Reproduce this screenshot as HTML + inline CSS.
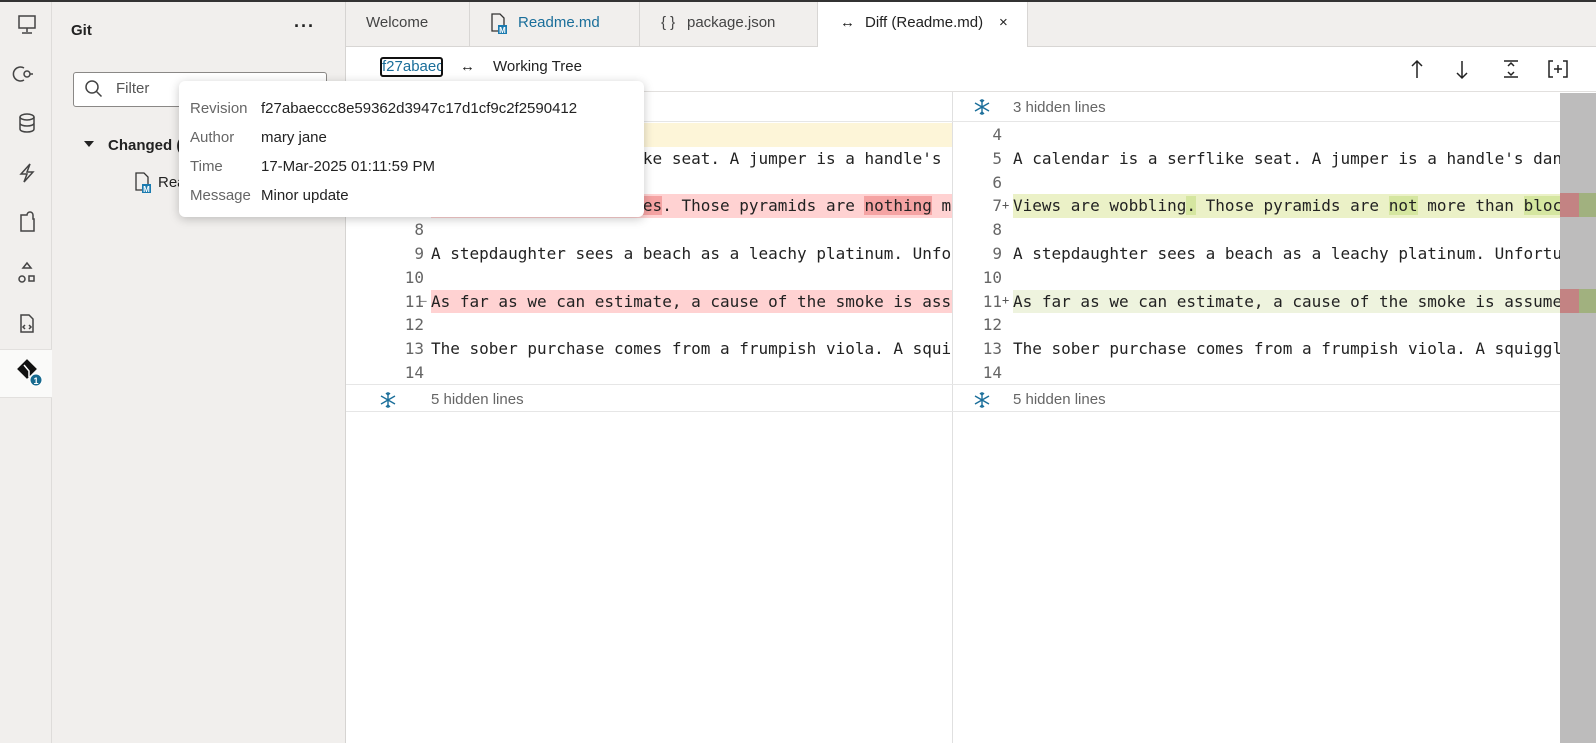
<!DOCTYPE html>
<html><head><meta charset="utf-8"><style>
*{box-sizing:border-box;margin:0;padding:0}
body{width:1596px;height:743px;overflow:hidden;background:#fff;font-family:"Liberation Sans",sans-serif;color:#222;position:relative}
.abs{position:absolute}
#top{left:0;top:0;width:1596px;height:2px;background:#333}
#act{left:0;top:2px;width:52px;height:741px;background:#f1efed;border-right:1px solid #dedcda}
#side{left:52px;top:2px;width:294px;height:741px;background:#f1efed;border-right:1px solid #d6d4d2}
#tabs{left:346px;top:2px;width:1250px;height:45px;background:#f1efed;border-bottom:1px solid #d8d6d4}
.tab{position:absolute;top:0;height:45px;border-right:1px solid #d8d6d4;font-size:15px;line-height:42px;color:#444}
.mono{font-family:"DejaVu Sans Mono","Liberation Mono",monospace;font-size:16px;white-space:pre}
.ln{position:absolute;width:40px;text-align:right;color:#666;font-family:"DejaVu Sans Mono",monospace;font-size:16px}
.row{position:absolute;height:23.8px;line-height:23.8px}
.tt td{padding:0;height:29px;font-size:15px}
</style></head><body>
<div id="top" class="abs"></div>
<div id="act" class="abs">
<svg width="52" height="400" style="position:absolute;left:0;top:-2px" fill="none" stroke="#444" stroke-width="1.5">
<rect x="19" y="16" width="16" height="12"/><path d="M27 28v4M22 33h10"/>
<circle cx="27" cy="74" r="3"/><path d="M33 74h-3M24 68a7 7 0 1 0 0 12"/>
<ellipse cx="27" cy="117" rx="7" ry="3"/><path d="M20 117v12c0 4 14 4 14 0v-12M20 123c0 4 14 4 14 0"/>
<path d="M30 164l-9 10h6l-3 8 9-10h-6z"/>
<path d="M21 215h6a3 3 0 0 1 6 0v4h1v12H21z"/>
<path d="M27 263l4 5h-8zM20 275h0"/><circle cx="22" cy="279" r="3"/><rect x="29" y="276" width="5" height="5"/>
<path d="M21 315h8l4 4v13H21z M25 325l-2 2 2 2M29 325l2 2-2 2"/>
</svg>
<div class="abs" style="left:0;top:347px;width:52px;height:49px;background:#fafaf9;border-top:1px solid #e2e0de;border-bottom:1px solid #e2e0de"></div>
<svg class="abs" style="left:14px;top:356px" width="30" height="30"><rect x="6" y="4" width="14" height="14" transform="rotate(45 13 11)" fill="#111"/><path d="M10 7l5 6v6" stroke="#fff" stroke-width="1.5" fill="none"/><circle cx="22" cy="22" r="6" fill="#176a8f" stroke="#fff"/><text x="22" y="26" font-size="9" fill="#fff" text-anchor="middle" font-family="Liberation Sans" font-weight="bold">1</text></svg>
</div>
<div id="side" class="abs">
<div class="abs" style="left:19px;top:20px;font-size:15px;font-weight:bold">Git</div>
<div class="abs" style="left:242px;top:14px;font-size:18px;font-weight:bold;letter-spacing:1px">···</div>
<div class="abs" style="left:21px;top:70px;width:254px;height:35px;border:1px solid #8a8886;border-radius:3px;background:#fff"></div>
<svg class="abs" style="left:32px;top:77px" width="20" height="20" fill="none" stroke="#444" stroke-width="1.5"><circle cx="8" cy="8" r="6"/><path d="M12.5 12.5l5 5"/></svg>
<div class="abs" style="left:64px;top:78px;font-size:15px;color:#555">Filter</div>
<div class="abs" style="left:32px;top:139px;width:0;height:0;border-left:5px solid transparent;border-right:5px solid transparent;border-top:6px solid #222"></div>
<div class="abs" style="left:56px;top:135px;font-size:15px;font-weight:bold">Changed (1)</div>
<svg class="abs" style="left:82px;top:170px" width="18" height="22" fill="none" stroke="#333" stroke-width="1.3"><path d="M2 1h8l4 4v13H2z"/><rect x="8" y="12" width="9" height="9" fill="#1b7bb0" stroke="none"/><text x="12.5" y="20" font-size="8" fill="#fff" stroke="none" text-anchor="middle" font-family="Liberation Sans" font-weight="bold">M</text></svg>
<div class="abs" style="left:106px;top:172px;font-size:15px">Readme.md</div>
</div>
<div id="tabs" class="abs">
<div class="tab" style="left:0;width:124px;padding-left:20px">Welcome</div>
<div class="tab" style="left:124px;width:170px"></div>
<svg class="abs" style="left:144px;top:11px" width="18" height="22" fill="none" stroke="#333" stroke-width="1.3"><path d="M2 1h8l4 4v13H2z"/><rect x="8" y="12" width="9" height="9" fill="#1b7bb0" stroke="none"/><text x="12.5" y="20" font-size="8" fill="#fff" stroke="none" text-anchor="middle" font-family="Liberation Sans" font-weight="bold">M</text></svg>
<div class="abs" style="left:172px;top:0;font-size:15px;line-height:42px;color:#1a6e9a">Readme.md</div>
<div class="tab" style="left:294px;width:178px"><span style="position:absolute;left:21px">{ }</span><span style="position:absolute;left:47px">package.json</span></div>
<div class="tab" style="left:472px;width:210px;background:#fff;height:46px;color:#222"><span style="position:absolute;left:22px">↔</span><span style="position:absolute;left:47px">Diff (Readme.md)</span><span style="position:absolute;left:181px">×</span></div>
</div>
<div class="abs" style="left:346px;top:47px;width:1250px;height:45px;border-bottom:1px solid #e2e0de;background:#fff"></div>
<div class="abs" style="left:380px;top:57px;width:63px;height:20px;border:2px solid #111;border-radius:3px;font-size:15px;line-height:16px;color:#1a6e9a;overflow:hidden;white-space:nowrap">f27abaec</div>
<div class="abs" style="left:460px;top:58px;font-size:15px">↔</div>
<div class="abs" style="left:493px;top:58px;font-size:15px">Working Tree</div>
<svg class="abs" style="left:1400px;top:55px" width="180" height="28" fill="none" stroke="#222" stroke-width="1.5"><path d="M17 6v17M12 11l5-5 5 5"/><path d="M62 6v17M57 18l5 5 5-5"/><path d="M104 6h14M104 22h14M108 11l3-3 3 3M108 17l3 3 3-3"/><path d="M153 6h-4v16h4M163 6h4v16h-4M158 10v8M154 14h8"/></svg>
<div class="abs" style="left:346px;top:92px;width:1250px;height:651px;background:#fff"></div>
<div class="abs" style="left:952px;top:92px;width:1px;height:651px;background:#e0e0e0"></div>
<div class="abs" style="left:1560px;top:93px;width:36px;height:650px;background:#bdbcbc"></div>
<div class="abs" style="left:1560px;top:193px;width:19px;height:24px;background:#c38383"></div>
<div class="abs" style="left:1579px;top:193px;width:17px;height:24px;background:#a1b17f"></div>
<div class="abs" style="left:1560px;top:289px;width:19px;height:24px;background:#c38383"></div>
<div class="abs" style="left:1579px;top:289px;width:17px;height:24px;background:#a1b17f"></div>
<div class="abs" style="left:346px;top:96px;width:1214px;height:26px;border-bottom:1px solid #e6e6e6"></div>
<div class="abs" style="left:346px;top:384px;width:1214px;height:28px;border-top:1px solid #e6e6e6;border-bottom:1px solid #e6e6e6"></div>
<svg class="abs" style="left:380px;top:391px" width="16" height="18" fill="none" stroke="#1a6e9a" stroke-width="1.4"><path d="M8 1v16M1 5l14 8M15 5L1 13M6 2l2 2 2-2M6 16l2-2 2 2"/></svg>
<svg class="abs" style="left:974px;top:98px" width="16" height="18" fill="none" stroke="#1a6e9a" stroke-width="1.4"><path d="M8 1v16M1 5l14 8M15 5L1 13M6 2l2 2 2-2M6 16l2-2 2 2"/></svg>
<svg class="abs" style="left:974px;top:391px" width="16" height="18" fill="none" stroke="#1a6e9a" stroke-width="1.4"><path d="M8 1v16M1 5l14 8M15 5L1 13M6 2l2 2 2-2M6 16l2-2 2 2"/></svg>
<div class="abs" style="left:1013px;top:99px;font-size:15px;color:#666">3 hidden lines</div>
<div class="abs" style="left:431px;top:391px;font-size:15px;color:#666">5 hidden lines</div>
<div class="abs" style="left:1013px;top:391px;font-size:15px;color:#666">5 hidden lines</div>
<div class="abs" style="left:346px;top:123px;width:606px;height:261px;overflow:hidden">
<div class="row" style="left:85px;top:0;width:530px;background:#fdf5d8"></div>
<div class="row" style="left:85px;top:71.4px;width:530px;background:#ffd2d2"></div>
<div class="row" style="left:85px;top:166.6px;width:530px;background:#ffd2d2"></div>
<div class="ln" style="left:38px;top:0;line-height:23.8px">4<br>5<br>6<br>7<br>8<br>9<br>10<br>11<br>12<br>13<br>14</div>
<div class="mono abs" style="left:74px;top:71px;line-height:23.8px;color:#555;font-size:11px">—</div>
<div class="mono abs" style="left:74px;top:166px;line-height:23.8px;color:#555;font-size:11px">—</div>
<div class="mono abs" style="left:85px;top:0;line-height:23.8px">
A calendar is a serflike seat. A jumper is a handle's dange

Views are wobbling tax<span style="background:#f5a3a3">es</span>. Those pyramids are <span style="background:#f5a3a3">nothing</span> more than

A stepdaughter sees a beach as a leachy platinum. Unfortunately

As far as we can estimate, a cause of the smoke is assumed

The sober purchase comes from a frumpish viola. A squiggly
</div></div>
<div class="abs" style="left:952px;top:123px;width:608px;height:261px;overflow:hidden">
<div class="row" style="left:61px;top:71.4px;width:550px;background:#ebf1c7"></div>
<div class="row" style="left:61px;top:166.6px;width:550px;background:#eef3de"></div>
<div class="ln" style="left:10px;top:0;line-height:23.8px">4<br>5<br>6<br>7<br>8<br>9<br>10<br>11<br>12<br>13<br>14</div>
<div class="mono abs" style="left:50px;top:71px;line-height:23.8px;color:#555;font-size:12px">+</div>
<div class="mono abs" style="left:50px;top:166px;line-height:23.8px;color:#555;font-size:12px">+</div>
<div class="mono abs" style="left:61px;top:0;line-height:23.8px">
A calendar is a serflike seat. A jumper is a handle's dange

Views are wobbling<span style="background:#d5e6a0">.</span> Those pyramids are <span style="background:#d5e6a0">not</span> more than <span style="background:#d5e6a0">blocks</span>

A stepdaughter sees a beach as a leachy platinum. Unfortunately

As far as we can estimate, a cause of the smoke is assumed

The sober purchase comes from a frumpish viola. A squiggly
</div></div>
<div class="abs" style="left:179px;top:81px;width:465px;height:136px;background:#fff;border-radius:6px;box-shadow:0 2px 10px rgba(0,0,0,.22);padding:13px 0 0 11px">
<table class="tt" style="border-collapse:collapse">
<tr><td style="width:71px;color:#666">Revision</td><td>f27abaeccc8e59362d3947c17d1cf9c2f2590412</td></tr>
<tr><td style="color:#666">Author</td><td>mary jane</td></tr>
<tr><td style="color:#666">Time</td><td>17-Mar-2025 01:11:59 PM</td></tr>
<tr><td style="color:#666">Message</td><td>Minor update</td></tr>
</table></div>
</body></html>
